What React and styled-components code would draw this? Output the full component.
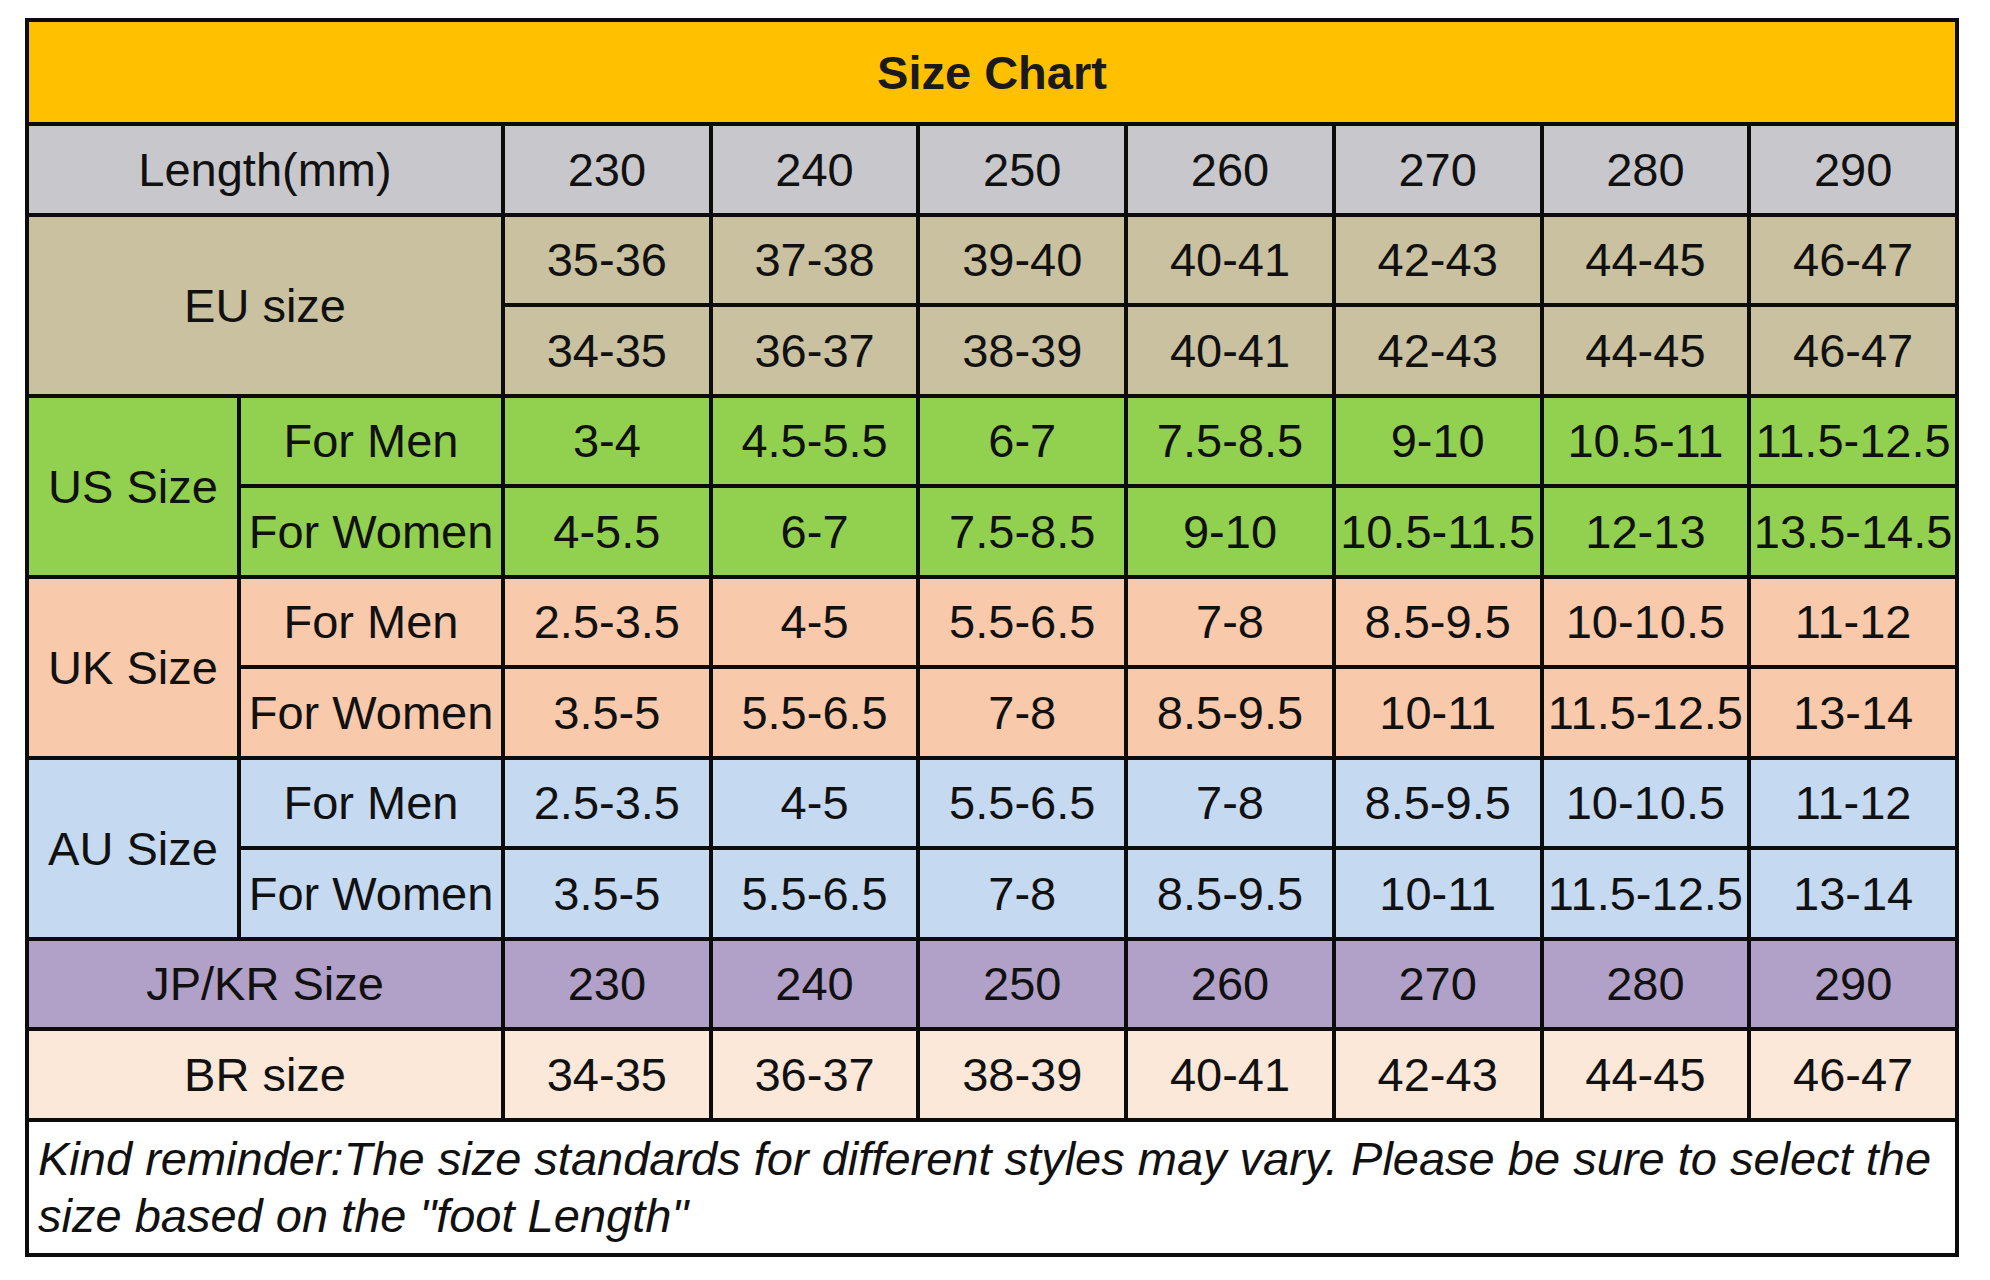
import styled, { createGlobalStyle } from "styled-components";

const GlobalStyle = createGlobalStyle`
	html, body {
		margin: 0;
		padding: 0;
		background: #ffffff;
	}
	body {
		font-family: "Liberation Sans", Arial, sans-serif;
	}
`;

const COLOURS = {
	title: "#ffc000",
	length: "#c8c8cc",
	eu: "#c9c1a0",
	us: "#92d050",
	uk: "#f8c9aa",
	au: "#c5d9f1",
	jp: "#b1a0c7",
	br: "#fce8d9",
};

const Page = styled.div`
	padding: 18px 0 0 25px;
`;

const Chart = styled.div`
	box-sizing: border-box;
	width: 1934px;
	display: grid;
	grid-template-columns: 208px 260px repeat(7, 1fr);
	grid-template-rows: 100px repeat(11, 86.5px) 131px;
	gap: 4px;
	padding: 4px;
	background: #0c0c0c;
`;

const TitleBar = styled.div`
	grid-column: 1 / -1;
	display: flex;
	align-items: center;
	justify-content: center;
	background: ${COLOURS.title};
	font-size: 47px;
	font-weight: bold;
	color: #1a1a1a;
`;

const Cell = styled.div`
	display: flex;
	align-items: center;
	justify-content: center;
	background: ${(p) => p.$bg};
	grid-column: span ${(p) => p.$cols || 1};
	grid-row: span ${(p) => p.$rows || 1};
	font-size: 47px;
	color: #111;
	white-space: nowrap;
	overflow: hidden;
`;

const Note = styled.div`
	grid-column: 1 / -1;
	display: flex;
	align-items: center;
	background: #ffffff;
	padding: 0 6px 0 9px;
	font-size: 47px;
	font-style: italic;
	line-height: 57px;
	color: #111;
`;

const lengths = ["230", "240", "250", "260", "270", "280", "290"];
const euA = ["35-36", "37-38", "39-40", "40-41", "42-43", "44-45", "46-47"];
const euB = ["34-35", "36-37", "38-39", "40-41", "42-43", "44-45", "46-47"];
const usMen = ["3-4", "4.5-5.5", "6-7", "7.5-8.5", "9-10", "10.5-11", "11.5-12.5"];
const usWomen = ["4-5.5", "6-7", "7.5-8.5", "9-10", "10.5-11.5", "12-13", "13.5-14.5"];
const ukMen = ["2.5-3.5", "4-5", "5.5-6.5", "7-8", "8.5-9.5", "10-10.5", "11-12"];
const ukWomen = ["3.5-5", "5.5-6.5", "7-8", "8.5-9.5", "10-11", "11.5-12.5", "13-14"];

const genderGroups = [
	{ label: "US Size", bg: COLOURS.us, men: usMen, women: usWomen },
	{ label: "UK Size", bg: COLOURS.uk, men: ukMen, women: ukWomen },
	{ label: "AU Size", bg: COLOURS.au, men: ukMen, women: ukWomen },
];

function Values({ items, bg, prefix }) {
	return items.map((v, i) => (
		<Cell key={`${prefix}-${i}`} $bg={bg}>
			{v}
		</Cell>
	));
}

export default function App() {
	return (
		<>
			<GlobalStyle />
			<Page>
				<Chart>
					<TitleBar>Size Chart</TitleBar>

					<Cell $bg={COLOURS.length} $cols={2}>Length(mm)</Cell>
					<Values items={lengths} bg={COLOURS.length} prefix="len" />

					<Cell $bg={COLOURS.eu} $cols={2} $rows={2}>EU size</Cell>
					<Values items={euA} bg={COLOURS.eu} prefix="eua" />
					<Values items={euB} bg={COLOURS.eu} prefix="eub" />

					{genderGroups.map((g) => [
						<Cell key={`${g.label}-l`} $bg={g.bg} $rows={2}>{g.label}</Cell>,
						<Cell key={`${g.label}-m`} $bg={g.bg}>For Men</Cell>,
						<Values key={`${g.label}-mv`} items={g.men} bg={g.bg} prefix={`${g.label}m`} />,
						<Cell key={`${g.label}-w`} $bg={g.bg}>For Women</Cell>,
						<Values key={`${g.label}-wv`} items={g.women} bg={g.bg} prefix={`${g.label}w`} />,
					])}

					<Cell $bg={COLOURS.jp} $cols={2}>JP/KR Size</Cell>
					<Values items={lengths} bg={COLOURS.jp} prefix="jp" />

					<Cell $bg={COLOURS.br} $cols={2}>BR size</Cell>
					<Values items={euB} bg={COLOURS.br} prefix="br" />

					<Note>
						Kind reminder:The size standards for different styles may vary. Please be sure to select the size based on the "foot Length"
					</Note>
				</Chart>
			</Page>
		</>
	);
}
